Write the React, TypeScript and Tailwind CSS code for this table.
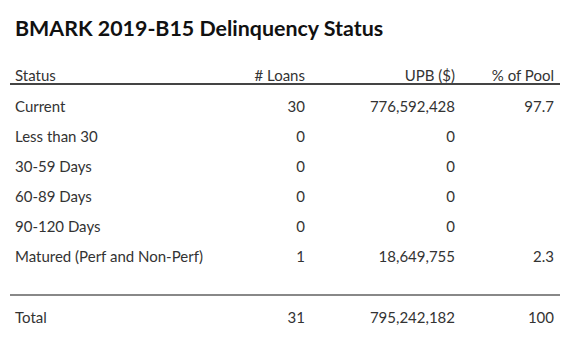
import React from 'react';

interface DelinquencyRow {
  status: string;
  loans: string;
  upb: string;
  pool: string;
}

const rows: DelinquencyRow[] = [
  { status: 'Current', loans: '30', upb: '776,592,428', pool: '97.7' },
  { status: 'Less than 30', loans: '0', upb: '0', pool: '' },
  { status: '30-59 Days', loans: '0', upb: '0', pool: '' },
  { status: '60-89 Days', loans: '0', upb: '0', pool: '' },
  { status: '90-120 Days', loans: '0', upb: '0', pool: '' },
  { status: 'Matured (Perf and Non-Perf)', loans: '1', upb: '18,649,755', pool: '2.3' },
];

const App: React.FC = () => {
  return (
    <div className="w-[570px] h-[337px] bg-white text-[#333] font-['Lato',sans-serif] overflow-hidden">
      <h1 className="pl-[15px] pt-[14px] h-[65px] text-[21.4px] font-bold text-[#111] leading-[28px]">
        BMARK 2019-B15 Delinquency Status
      </h1>

      <div className="mx-[10px] w-[550px] text-[15px] leading-[18px]">
        {/* Header */}
        <div className="flex h-[20px] border-b-2 border-[#444] leading-[21px]">
          <div className="w-[200px] pl-[5px]">Status</div>
          <div className="w-[95px] text-right"># Loans</div>
          <div className="w-[150px] text-right">UPB ($)</div>
          <div className="w-[99px] text-right">% of Pool</div>
        </div>

        {/* Body */}
        <div className="pt-[6px]">
          {rows.map(r => (
            <div key={r.status} className="flex h-[30px] items-center">
              <div className="w-[200px] pl-[5px]">{r.status}</div>
              <div className="w-[95px] text-right">{r.loans}</div>
              <div className="w-[150px] text-right">{r.upb}</div>
              <div className="w-[99px] text-right">{r.pool}</div>
            </div>
          ))}
        </div>

        {/* Total */}
        <div className="mt-[23px] border-t-2 border-[#888] pt-[6px]">
          <div className="flex h-[30px] items-center">
            <div className="w-[200px] pl-[5px]">Total</div>
            <div className="w-[95px] text-right">31</div>
            <div className="w-[150px] text-right">795,242,182</div>
            <div className="w-[99px] text-right">100</div>
          </div>
        </div>
      </div>
    </div>
  );
};

export default App;
